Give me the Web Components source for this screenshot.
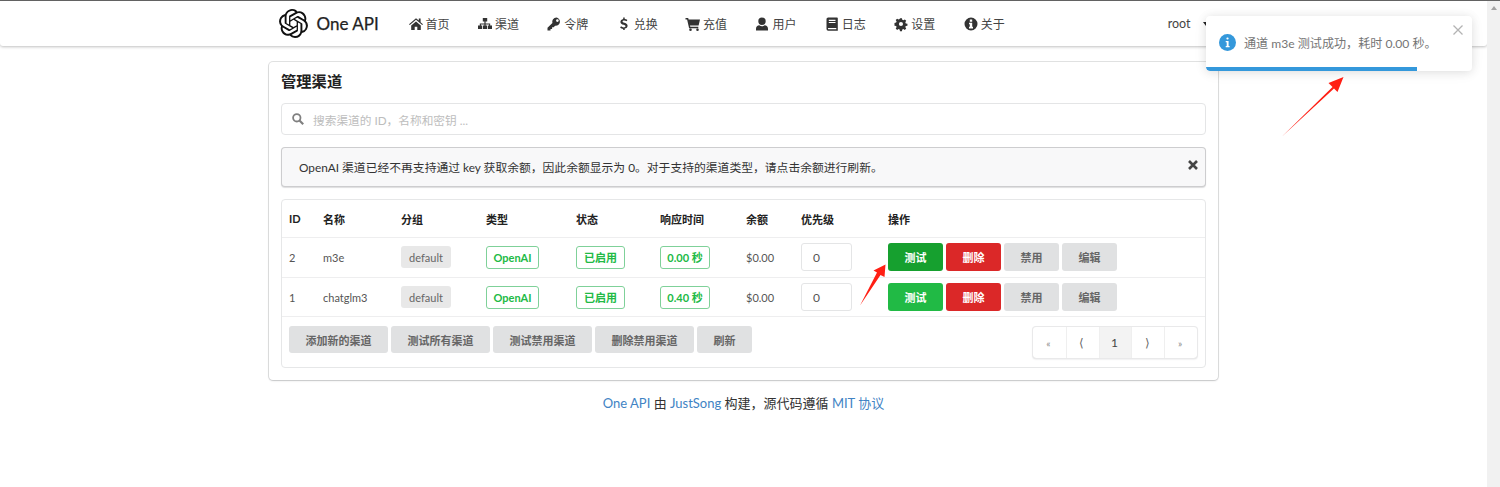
<!DOCTYPE html>
<html lang="zh-CN">
<head>
<meta charset="utf-8">
<title>One API</title>
<style>
    html, body { margin: 0; height: 100%; overflow: hidden; background: #fff; }
    body { font-family: Lato, "Noto Sans CJK SC", sans-serif; color: #333; }
    #shell { display: flex; height: 486px; border-top: 1px solid #666; position: relative; }
    #page { flex: 1; min-width: 0; }
</style>
</head>
<body>
<div id="shell">
    <div id="page">
        <nav-bar></nav-bar>
        <panel-card heading="管理渠道">
            <search-box placeholder="搜索渠道的 ID，名称和密钥 ..."></search-box>
            <notice-box>OpenAI 渠道已经不再支持通过 key 获取余额，因此余额显示为 0。对于支持的渠道类型，请点击余额进行刷新。</notice-box>
            <channel-table></channel-table>
        </panel-card>
        <page-footer></page-footer>
    </div>
    <scroll-strip></scroll-strip>
    <toast-note>通道 m3e 测试成功，耗时 0.00 秒。</toast-note>
    <red-arrows></red-arrows>
</div>

<script>
const ICONS = {
    home: '<path d="M8 2.2 1 8.2l.8.9L8 3.8l6.2 5.3.8-.9-2.4-2V2.6h-1.8v2L8 2.2zM3.2 9.6V14h3.5v-3.2h2.6V14h3.5V9.6L8 5.5 3.2 9.6z"/>',
    sitemap: '<path d="M5.8 2h4.4v3.4H8.6v2h4.6v2.2H15V13h-4.2V9.6h1.3V8.5H8.6v1.1H10V13H6V9.6h1.4V8.5H3.9v1.1h1.3V13H1V9.6h1.8V7.4h4.6v-2H5.8z"/>',
    key: '<path d="M10.4 1.5a4.2 4.2 0 0 0-4 5.4L1.5 11.8V14.5h3v-1.6h1.6v-1.6h1.6l1.4-1.5a4.2 4.2 0 1 0 1.3-8.3zm1 1.7a1.3 1.3 0 1 1 0 2.7 1.3 1.3 0 0 1 0-2.7z"/>',
    dollar: '<path d="M7.2 1.5h1.5v1.4c1.1.1 2 .5 2.7 1l-.8 1.4a4 4 0 0 0-2.4-.9c-1 0-1.6.4-1.6 1s.5.9 1.9 1.4c2 .6 3.1 1.4 3.1 3 0 1.5-1.1 2.6-2.9 2.8v1.4H7.2V13c-1.2-.1-2.3-.6-3.1-1.3L5 10.3c.8.7 1.8 1.1 2.8 1.1s1.7-.4 1.7-1.1-.6-1-2-1.5C5.7 8.3 4.4 7.5 4.4 5.9c0-1.5 1.1-2.7 2.8-3z"/>',
    cart: '<path d="M.5 2h2.7l.4 1.500H15l-1.400 6H5l.3 1.300h8v1.400H4.100L2.100 3.400H.5zM5.500 12.500a1.300 1.300 0 1 1 0 2.600 1.300 1.300 0 0 1 0-2.600zm7 0a1.300 1.300 0 1 1 0 2.600 1.300 1.300 0 0 1 0-2.600z"/>',
    user: '<path d="M8 1.500a3.500 3.500 0 1 1 0 7.400 3.500 3.500 0 0 1 0-7.400zM2 14.500v-1.800c0-2.200 1.500-3.500 3.300-3.500.8.600 1.700 1 2.700 1s1.900-.4 2.700-1c1.800 0 3.300 1.300 3.300 3.500v1.800z"/>',
    book: '<path d="M4.200 1.500H13a.8.800 0 0 1 .8.800v12.400H4.200A1.700 1.700 0 0 1 2.500 13V3.200c0-.9.800-1.700 1.700-1.700zm.6 2.200v1.200h6.700V3.700zm0 2.200v1.200h6.700V5.900zm-.6 6.100a.9.900 0 0 0 0 1.300h8.100V12z"/>',
    cog: '<g transform="translate(1.400 1.400) scale(.82)"><path fill-rule="evenodd" d="M6.800 1h2.400l.4 2 1.300.6 1.800-1.100 1.700 1.700-1.100 1.800.6 1.300 2 .4v2.400l-2 .4-.6 1.300 1.100 1.800-1.700 1.700-1.800-1.100-1.300.6-.4 2H6.800l-.4-2-1.300-.6-1.800 1.100-1.700-1.700 1.100-1.800-.6-1.300-2-.4V6.700l2-.4.6-1.300-1.100-1.800 1.700-1.700 1.800 1.100 1.300-.6zM8 5.500a2.500 2.500 0 1 0 0 5 2.500 2.500 0 0 0 0-5z"/></g>',
    info: '<path fill-rule="evenodd" d="M8 1.500a6.500 6.500 0 1 1 0 13 6.500 6.500 0 0 1 0-13zM6.800 3.500v2.200h2.400V3.500zM6 6.800v1.400h.8v2.600H6v1.600h4v-1.600h-.8V6.800z"/>'
};

function icon(name, size) {
    return `<svg viewBox="0 0 16 16" width="${size}" height="${size}" fill="currentColor" aria-hidden="true">${ICONS[name]}</svg>`;
}

class NavBar extends HTMLElement {
    constructor() {
        super();
        this.attachShadow({ mode: 'open' });
        const items = [['home', '首页'], ['sitemap', '渠道'], ['key', '令牌'], ['dollar', '兑换'], ['cart', '充值'],
            ['user', '用户'], ['book', '日志'], ['cog', '设置'], ['info', '关于']];
        this.shadowRoot.innerHTML = `
            <style>
                :host {
                    display: block;
                    height: 45px;
                    background: #fff;
                    border-radius: 0 0 3px 3px;
                    box-shadow: 0 1px 3px rgba(0, 0, 0, 0.25);
                    font-size: 12px;
                    color: #444;
                }
                .inner {
                    width: 950px;
                    height: 100%;
                    margin: 0 auto;
                    display: flex;
                    align-items: center;
                    padding: 0 10px;
                    box-sizing: border-box;
                }
                .brand {
                    display: flex;
                    align-items: center;
                    gap: 9px;
                    width: 129px;
                    font-size: 17px;
                    color: #222;
                    -webkit-text-stroke: 0.25px #222;
                }
                .brand svg { width: 29px; height: 29px; flex: none; }
                .item {
                    width: 69.400px;
                    flex: none;
                    display: flex;
                    align-items: center;
                    gap: 2px;
                }
                .item svg { flex: none; color: #333; }
                .user { margin-left: auto; display: flex; align-items: center; gap: 12px; font-size: 12.500px; }
                .caret { width: 0; height: 0; border: 3px solid transparent; border-top: 4px solid #222; border-bottom: 0; }
            </style>
            <div class="inner">
                <div class="brand">
                    <svg viewBox="0 0 24 24" fill="#111"><path d="M22.2819 9.8211a5.9847 5.9847 0 0 0-.5157-4.9108 6.0462 6.0462 0 0 0-6.5098-2.9A6.0651 6.0651 0 0 0 4.9807 4.1818a5.9847 5.9847 0 0 0-3.9977 2.9 6.0462 6.0462 0 0 0 .7427 7.0966 5.98 5.98 0 0 0 .511 4.9107 6.051 6.051 0 0 0 6.5146 2.9001A5.9847 5.9847 0 0 0 13.2599 24a6.0557 6.0557 0 0 0 5.7718-4.2058 5.9894 5.9894 0 0 0 3.9977-2.9001 6.0557 6.0557 0 0 0-.7475-7.0729zm-9.022 12.6081a4.4755 4.4755 0 0 1-2.8764-1.0408l.1419-.0804 4.7783-2.7582a.7948.7948 0 0 0 .3927-.6813v-6.7369l2.02 1.1686a.071.071 0 0 1 .038.052v5.5826a4.504 4.504 0 0 1-4.4945 4.4944zm-9.6607-4.1254a4.4708 4.4708 0 0 1-.5346-3.0137l.142.0852 4.783 2.7582a.7712.7712 0 0 0 .7806 0l5.8428-3.3685v2.3324a.0804.0804 0 0 1-.0332.0615L9.74 19.9502a4.4992 4.4992 0 0 1-6.1408-1.6464zM2.3408 7.8956a4.485 4.485 0 0 1 2.3655-1.9728V11.6a.7664.7664 0 0 0 .3879.6765l5.8144 3.3543-2.0201 1.1685a.0757.0757 0 0 1-.071 0l-4.8303-2.7865A4.504 4.504 0 0 1 2.3408 7.872zm16.5963 3.8558L13.1038 8.364 15.1192 7.2a.0757.0757 0 0 1 .071 0l4.8303 2.7913a4.4944 4.4944 0 0 1-.6765 8.1042v-5.6772a.79.79 0 0 0-.407-.667zm2.0107-3.0231l-.142-.0852-4.7735-2.7818a.7759.7759 0 0 0-.7854 0L9.409 9.2297V6.8974a.0662.0662 0 0 1 .0284-.0615l4.8303-2.7866a4.4992 4.4992 0 0 1 6.6802 4.66zM8.3065 12.863l-2.02-1.1638a.0804.0804 0 0 1-.038-.0567V6.0742a4.4992 4.4992 0 0 1 7.3757-3.4537l-.142.0805L8.704 5.459a.7948.7948 0 0 0-.3927.6813zm1.0976-2.3654l2.602-1.4998 2.6069 1.4998v2.9994l-2.5974 1.4997-2.6067-1.4997Z"/></svg>
                    <span>One API</span>
                </div>
                ${items.map(([i, t]) => `<div class="item">${icon(i, 16)}<span>${t}</span></div>`).join('')}
                <div class="user"><span>root</span><span class="caret"></span></div>
            </div>
        `;
    }
}

class PanelCard extends HTMLElement {
    constructor() {
        super();
        this.attachShadow({ mode: 'open' });
        this.shadowRoot.innerHTML = `
            <style>
                :host {
                    display: block;
                    box-sizing: border-box;
                    width: 949px;
                    height: 318px;
                    margin: 16px auto 0;
                    padding: 10px 12px 0;
                    background: #fff;
                    border-radius: 4px;
                    box-shadow: 0 1px 2px rgba(34, 36, 38, 0.15), 0 0 0 1px rgba(34, 36, 38, 0.13);
                }
                h3 { margin: 0 0 12px; font-size: 15.300px; line-height: 19px; font-weight: 700; color: #222; }
                .stack { display: flex; flex-direction: column; gap: 12px; }
            </style>
            <h3>${this.getAttribute('heading')}</h3>
            <div class="stack"><slot></slot></div>
        `;
    }
}

class SearchBox extends HTMLElement {
    constructor() {
        super();
        this.attachShadow({ mode: 'open' });
        this.shadowRoot.innerHTML = `
            <style>
                :host {
                    display: flex;
                    align-items: center;
                    box-sizing: border-box;
                    height: 32px;
                    padding-left: 10px;
                    gap: 9px;
                    border: 1px solid #e4e5e6;
                    border-radius: 4px;
                    font-size: 11.700px;
                    color: #bdbdbd;
                }
                svg { flex: none; }
            </style>
            <svg width="12" height="12" viewBox="0 0 12 12" fill="none" stroke="#808080" stroke-width="1.800"><circle cx="4.800" cy="4.800" r="3.700"/><path d="M7.500 7.500 11.200 11.200" stroke-width="2.200"/></svg>
            <span>${this.getAttribute('placeholder')}</span>
        `;
    }
}

class NoticeBox extends HTMLElement {
    constructor() {
        super();
        this.attachShadow({ mode: 'open' });
        this.shadowRoot.innerHTML = `
            <style>
                :host {
                    display: flex;
                    align-items: center;
                    justify-content: space-between;
                    box-sizing: border-box;
                    height: 40px;
                    padding: 0 8px 2px 18px;
                    background: #f8f8f9;
                    border-radius: 4px;
                    box-shadow: 0 0 0 1px rgba(34, 36, 38, 0.2) inset, 0 1px 1px rgba(34, 36, 38, 0.15);
                    font-size: 11.800px;
                    color: #333;
                }
                svg { flex: none; margin-bottom: 3px; }
            </style>
            <span><slot></slot></span>
            <svg width="10" height="10" viewBox="0 0 10 10" stroke="#444" stroke-width="2.600"><path d="M1 1 9 9M9 1 1 9"/></svg>
        `;
    }
}

class StatusLabel extends HTMLElement {
    constructor() {
        super();
        this.attachShadow({ mode: 'open' });
        this.shadowRoot.innerHTML = `
            <style>
                :host {
                    display: inline-flex;
                    align-items: center;
                    justify-content: center;
                    box-sizing: border-box;
                    height: 23px;
                    border: 1px solid #7fd199;
                    border-radius: 3px;
                    background: #fff;
                    color: #21ba45;
                    font-size: 11px;
                    font-weight: 700;
                    white-space: nowrap;
                }
                :host([plain]) {
                    height: 22px;
                    border: 0;
                    background: #e8e8e8;
                    color: #666;
                    font-weight: 400;
                }
            </style>
            <slot></slot>
        `;
    }
}

class ActionButton extends HTMLElement {
    constructor() {
        super();
        this.attachShadow({ mode: 'open' });
        this.shadowRoot.innerHTML = `
            <style>
                :host {
                    display: inline-flex;
                    align-items: center;
                    justify-content: center;
                    box-sizing: border-box;
                    height: 28px;
                    border-radius: 3px;
                    background: var(--bg, #e0e1e2);
                    color: var(--fg, #666);
                    font-size: 11px;
                    font-weight: 700;
                    white-space: nowrap;
                }
            </style>
            <slot></slot>
        `;
    }
}

class ChannelTable extends HTMLElement {
    constructor() {
        super();
        this.attachShadow({ mode: 'open' });
        const heads = ['ID', '名称', '分组', '类型', '状态', '响应时间', '余额', '优先级', '操作'];
        const rows = [
            { id: 2, name: 'm3e', time: '0.00 秒', test: '#16a02f', height: 40, pad: 1 },
            { id: 1, name: 'chatglm3', time: '0.40 秒', test: '#21ba45', height: 39, pad: 0 }
        ];
        const btn = (text, w, bg, fg) => `<action-button style="width:${w}px;--bg:${bg};--fg:${fg}">${text}</action-button>`;
        this.shadowRoot.innerHTML = `
            <style>
                :host {
                    display: block;
                    box-sizing: border-box;
                    height: 169px;
                    border: 1px solid #e6e7e8;
                    border-radius: 4px;
                    font-size: 11px;
                    color: #555;
                }
                .row {
                    display: grid;
                    grid-template-columns: 34px 78px 85px 90px 84px 86px 55px 87px 1fr;
                    align-items: center;
                    box-sizing: border-box;
                    padding-left: 7px;
                    border-bottom: 1px solid #eeeeef;
                }
                .head { height: 38px; font-weight: 700; color: #222; }
                .ops { display: flex; gap: 3px; }
                .num {
                    width: 51px;
                    height: 28px;
                    box-sizing: border-box;
                    padding-left: 11px;
                    display: flex;
                    align-items: center;
                    border: 1px solid #e4e5e6;
                    border-radius: 3px;
                    font-size: 12px;
                }
                .foot {
                    display: flex;
                    justify-content: space-between;
                    align-items: flex-start;
                    padding: 9px 8px 0 7px;
                }
                .tools { display: flex; gap: 3px; }
                .tools action-button { height: 27px; }
                .pager {
                    display: flex;
                    height: 31px;
                    margin-top: 1px;
                    border-radius: 3px;
                    box-shadow: 0 0 0 1px #e9e9ea, 0 1px 2px rgba(34, 36, 38, 0.2);
                    color: #666;
                    font-size: 12px;
                }
                .pager span {
                    width: 32.800px;
                    padding-right: 2px;
                    display: flex;
                    align-items: center;
                    justify-content: center;
                    border-left: 1px solid #efefef;
                    box-sizing: border-box;
                }
                .pager span:first-child { border-left: 0; }
                .pager .on { background: #f3f3f3; color: #444; }
                .pager .sm { font-size: 10px; color: #888; }
            </style>
            <div class="row head">${heads.map(h => `<div>${h}</div>`).join('')}</div>
            ${rows.map(r => `
                <div class="row" style="height:${r.height}px;padding-bottom:${r.pad}px">
                    <div>${r.id}</div>
                    <div>${r.name}</div>
                    <div><status-label plain style="width:50px">default</status-label></div>
                    <div><status-label style="width:53px">OpenAI</status-label></div>
                    <div><status-label style="width:49px">已启用</status-label></div>
                    <div><status-label style="width:50px">${r.time}</status-label></div>
                    <div>$0.00</div>
                    <div class="num">0</div>
                    <div class="ops">
                        ${btn('测试', 55, r.test, '#fff')}
                        ${btn('删除', 55, '#db2828', '#fff')}
                        ${btn('禁用', 55, '#e0e1e2', '#666')}
                        ${btn('编辑', 55, '#e0e1e2', '#666')}
                    </div>
                </div>`).join('')}
            <div class="foot">
                <div class="tools">
                    ${btn('添加新的渠道', 99, '#e0e1e2', '#666')}
                    ${btn('测试所有渠道', 99, '#e0e1e2', '#666')}
                    ${btn('测试禁用渠道', 99, '#e0e1e2', '#666')}
                    ${btn('删除禁用渠道', 99, '#e0e1e2', '#666')}
                    ${btn('刷新', 55, '#e0e1e2', '#666')}
                </div>
                <div class="pager">
                    <span class="sm">«</span><span>⟨</span><span class="on">1</span><span>⟩</span><span class="sm">»</span>
                </div>
            </div>
        `;
    }
}

class PageFooter extends HTMLElement {
    constructor() {
        super();
        this.attachShadow({ mode: 'open' });
        this.shadowRoot.innerHTML = `
            <style>
                :host { display: block; margin-top: 14px; text-align: center; font-size: 13px; line-height: 18px; color: #333; }
                a { color: #4183c4; text-decoration: none; }
            </style>
            <a href="#">One API</a> 由 <a href="#">JustSong</a> 构建，源代码遵循 <a href="#">MIT 协议</a>
        `;
    }
}

class ScrollStrip extends HTMLElement {
    constructor() {
        super();
        this.attachShadow({ mode: 'open' });
        this.shadowRoot.innerHTML = `
            <style>
                :host { display: flex; justify-content: center; flex: none; width: 13px; background: #f1f1f1; padding-top: 5px; box-sizing: border-box; }
                i { width: 0; height: 0; border: 3.500px solid transparent; border-bottom: 4px solid #a3a3a3; border-top: 0; }
            </style>
            <i></i>
        `;
    }
}

class ToastNote extends HTMLElement {
    constructor() {
        super();
        this.attachShadow({ mode: 'open' });
        this.shadowRoot.innerHTML = `
            <style>
                :host {
                    position: absolute;
                    left: 1206px;
                    top: 15px;
                    width: 266px;
                    height: 55px;
                    display: flex;
                    align-items: center;
                    gap: 8px;
                    box-sizing: border-box;
                    padding: 0 0 2px 13px;
                    background: #fff;
                    border-radius: 4px;
                    box-shadow: 0 1px 10px rgba(0, 0, 0, 0.1), 0 2px 15px rgba(0, 0, 0, 0.05);
                    font-size: 12.100px;
                    color: #757575;
                    overflow: hidden;
                }
                .close { position: absolute; right: 9px; top: 9px; }
                .bar { position: absolute; left: 0; bottom: 0; width: 211px; height: 4px; background: #3498db; border-bottom-left-radius: 4px; }
            </style>
            <svg width="17" height="17" viewBox="0 0 17 17" style="flex:none"><circle cx="8.500" cy="8.500" r="8.500" fill="#3498db"/><rect x="7.400" y="3.400" width="2.200" height="2.200" rx="1" fill="#fff"/><path d="M6.700 7h2.900v5h1v1.200H6.700V12h1V8.200h-1z" fill="#fff"/></svg>
            <span><slot></slot></span>
            <svg class="close" width="10" height="10" viewBox="0 0 10 10" stroke="#b3b3b3" stroke-width="1.300"><path d="M.5.500l9 9M9.500.500l-9 9"/></svg>
            <div class="bar"></div>
        `;
    }
}

class RedArrows extends HTMLElement {
    constructor() {
        super();
        this.attachShadow({ mode: 'open' });
        this.shadowRoot.innerHTML = `
            <style>
                :host { position: absolute; inset: -1px 0 0 0; pointer-events: none; }
                svg { display: block; }
            </style>
            <svg width="1500" height="487" fill="#ff1f14">
                <path d="M1282 136.500 1332.500 87 1328.500 83 1343.500 77 1337.500 92 1334 88.500z"/>
                <path d="M860 305.500 877 272.500 873.500 270.500 885.500 264.500 884.500 277 880.500 275z"/>
            </svg>
        `;
    }
}

customElements.define('nav-bar', NavBar);
customElements.define('panel-card', PanelCard);
customElements.define('search-box', SearchBox);
customElements.define('notice-box', NoticeBox);
customElements.define('status-label', StatusLabel);
customElements.define('action-button', ActionButton);
customElements.define('channel-table', ChannelTable);
customElements.define('page-footer', PageFooter);
customElements.define('scroll-strip', ScrollStrip);
customElements.define('toast-note', ToastNote);
customElements.define('red-arrows', RedArrows);
</script>
</body>
</html>
